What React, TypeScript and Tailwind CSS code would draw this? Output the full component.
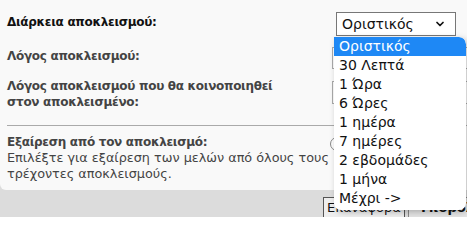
import { ChevronDown } from 'lucide-react'

const durations = [
  'Οριστικός',
  '30 Λεπτά',
  '1 Ώρα',
  '6 Ώρες',
  '1 ημέρα',
  '7 ημέρες',
  '2 εβδομάδες',
  '1 μήνα',
  'Μέχρι ->',
]

const DurationMenu = () => (
  <ul className="absolute left-[334px] top-[37px] w-[132px] overflow-hidden rounded-b-[7px] rounded-tr-[7px] bg-white pb-[2px] text-[14px] leading-[19px] text-[#111] shadow-[2px_2px_6px_rgba(0,0,0,0.25)]">
    {durations.map((d, i) => (
      <li
        key={d}
        className={
          i === 0
            ? 'rounded-tr-[7px] bg-[#1e88f5] px-[5px] text-white'
            : 'px-[5px]'
        }
      >
        {d}
      </li>
    ))}
  </ul>
)

export default function App() {
  return (
    <div className="relative h-[217px] w-[467px] overflow-hidden bg-[#dcdcdc] font-['DejaVu_Sans',sans-serif]">
      <div className="w-[480px] rounded-b-[6px] bg-[#f9f9f9] pb-[8px] pl-[7px] text-[12.8px] leading-[16px] text-[#444]">
        <div className="flex items-start justify-between pt-[12px]">
          <span className="pt-[2px] text-[12px] font-bold tracking-[-0.3px] text-[#111]">
            Διάρκεια αποκλεισμού:
          </span>
          <div className="mr-[24px] flex h-[24px] w-[120px] items-center justify-between border border-[#777] bg-white pl-[5px] pr-[9px] text-[14px] text-[#111]">
            <span>Οριστικός</span>
            <ChevronDown size={12} strokeWidth={3.5} />
          </div>
        </div>

        <div className="mt-[11px] flex items-start justify-between">
          <span className="pt-[1px] text-[12px] font-bold tracking-[-0.3px]">Λόγος αποκλεισμού:</span>
          <div className="h-[22px] w-[148px] border border-[#aaa] bg-white" />
        </div>

        <div className="mt-[9px] flex items-start justify-between">
          <span className="text-[12px] font-bold tracking-[-0.3px]">
            Λόγος αποκλεισμού που θα κοινοποιηθεί
            <br />
            στον αποκλεισμένο:
          </span>
          <div className="mt-[3px] h-[23px] w-[148px] border border-[#aaa] bg-white" />
        </div>

        <div className="mr-[10px] mt-[15px] border-t border-[#aaa]" />

        <div className="mt-[8px] flex items-start justify-between">
          <div>
            <div className="text-[12px] font-bold tracking-[-0.3px]">Εξαίρεση από τον αποκλεισμό:</div>
            <div>
              Επιλέξτε για εξαίρεση των μελών από όλους τους
              <br />
              τρέχοντες αποκλεισμούς.
            </div>
          </div>
          <div className="mr-[136px] mt-[3px] h-[14px] w-[14px] rounded-full border border-[#888] bg-white" />
        </div>
      </div>

      <div className="flex gap-[3px] pl-[323px] pt-[7px] text-[13px] text-[#111]">
        <span className="border border-[#555] bg-[#eee] px-[3px]">Επαναφορά</span>
        <span className="border border-[#888] bg-[#e4e4e4] px-[10px] font-bold">Υποβολή</span>
      </div>

      <DurationMenu />
    </div>
  )
}
